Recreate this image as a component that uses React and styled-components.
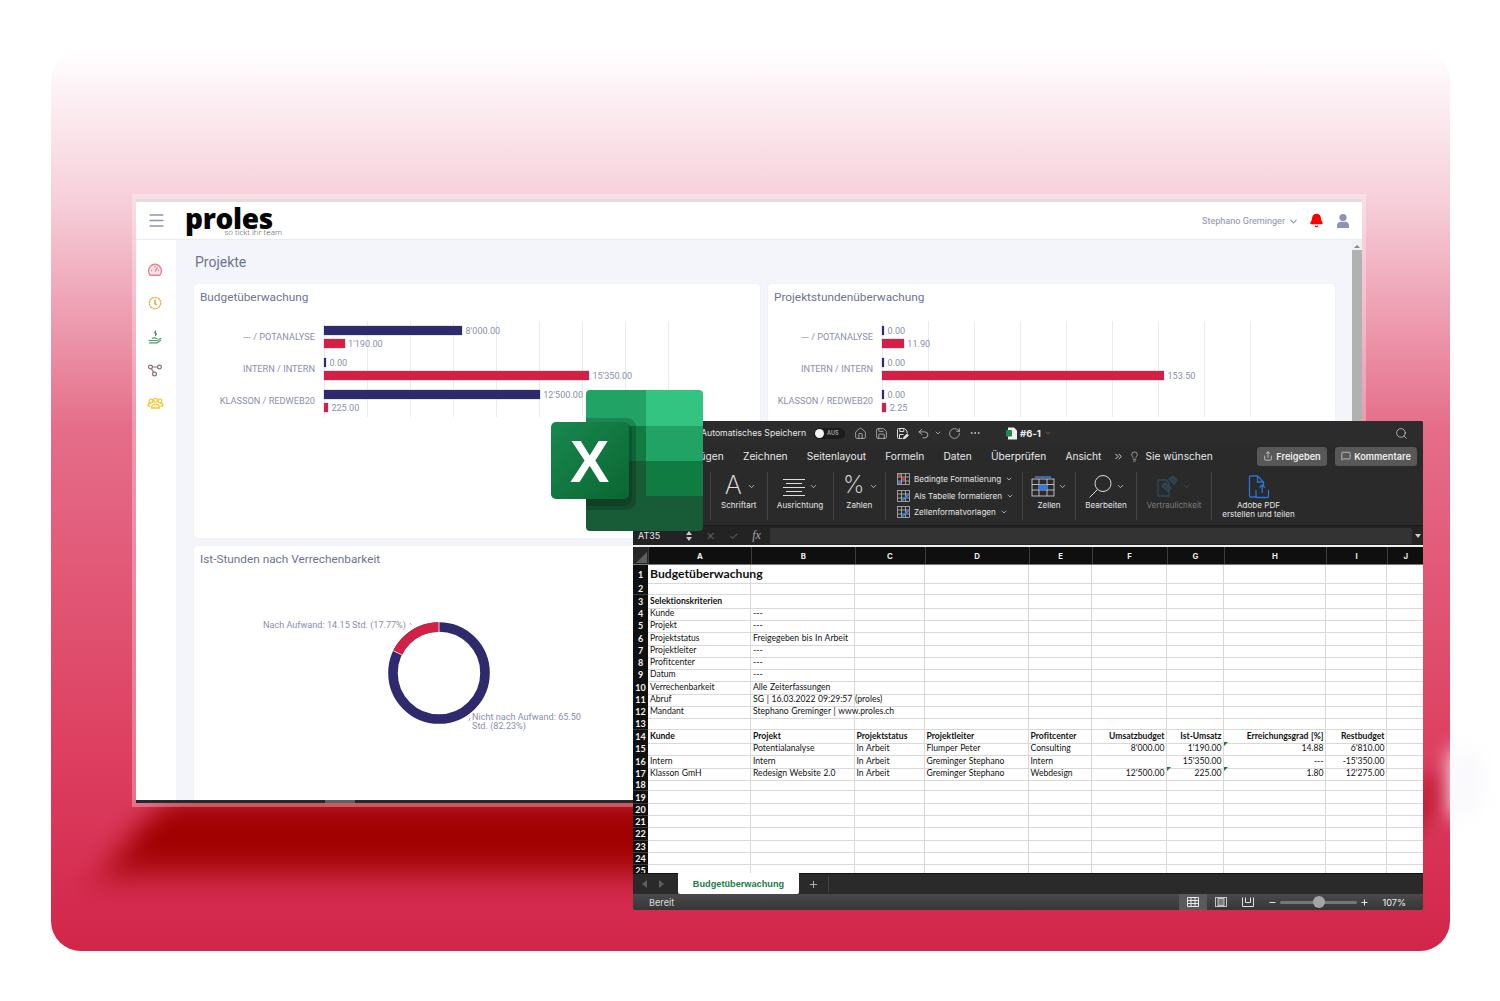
import React from 'react';
import styled, { createGlobalStyle } from 'styled-components';
import {
  Menu, ChevronDown, Bell, House, Save, Undo2, RotateCw, Ellipsis, Search, Lightbulb,
  Share, MessageSquare, ChevronsRight, Plus, Minus,
} from 'lucide-react';

const GlobalStyle = createGlobalStyle`
  html, body { margin: 0; padding: 0; background: #fff; }
  * { box-sizing: border-box; }
  body { font-family: "Roboto", "Liberation Sans", sans-serif; font-variant-ligatures: none; }
`;

const Stage = styled.div`
  position: relative;
  width: 1500px;
  height: 1001px;
  padding: 50px 50px 50px 51px;
  overflow: hidden;
`;

const Hero = styled.div`
  position: relative;
  height: 901px;
  border-radius: 30px;
  overflow: hidden;
  background: linear-gradient(180deg, #ffffff 0%, #f6ced9 17%, #e56d89 42%, #dd3f60 78%, #d2254a 100%);
`;

const FloorShadow = styled.div`
  position: absolute;
  left: 82px;
  top: 748px;
  width: 1270px;
  height: 76px;
  background: #a00000;
  filter: blur(17px);
  transform: skewX(-38deg);
`;

const SideGlow = styled.div`
  position: absolute;
  left: 1370px;
  top: 725px;
  width: 24px;
  height: 36px;
  border-radius: 50%;
  background: #c9203f;
  filter: blur(9px);
`;

const OuterGlow = styled.div`
  position: absolute;
  left: 1450px;
  top: 750px;
  width: 34px;
  height: 66px;
  border-radius: 0 50% 50% 0;
  background: #f9f9fc;
  filter: blur(10px);
`;

/* proles app window */
const Frame = styled.div`
  position: absolute;
  left: 132px;
  top: 194px;
  width: 1234px;
  height: 613px;
  padding: 5px 4px 4px;
  background: rgba(255, 255, 255, 0.3);
`;

const AppWindow = styled.div`
  display: flex;
  flex-direction: column;
  width: 1226px;
  height: 604px;
  border-top: 3px solid #dedede;
  background: #fff;
`;

const TopBar = styled.header`
  display: flex;
  align-items: center;
  flex: 0 0 38px;
  padding: 0 11px 0 11px;
  border-bottom: 1px solid #e8ebf3;
  background: #fff;
  color: #8d93b4;
`;

const Logo = styled.div`
  display: flex;
  flex-direction: column;
  margin-left: 19px;
  width: 97px;
`;

const LogoWord = styled.span`
  font: 800 28px/24px "Open Sans", sans-serif;
  color: #050505;
  letter-spacing: -0.3px;
`;

const LogoTag = styled.span`
  align-self: flex-end;
  margin-top: -2px;
  font: 300 8px/8px "Open Sans", sans-serif;
  color: #444;
  white-space: nowrap;
`;

const UserBox = styled.div`
  display: flex;
  align-items: center;
  margin-left: auto;
`;

const UserName = styled.span`
  font-size: 9.1px;
  color: #8a90ab;
`;

const Main = styled.div`
  display: flex;
  flex: 1;
  min-height: 0;
`;

const SideNav = styled.nav`
  display: flex;
  flex-direction: column;
  align-items: center;
  gap: 17.4px;
  flex: 0 0 40px;
  padding: 22px 2px 0 0;
  background: #fff;
`;

const Content = styled.main`
  flex: 1;
  padding: 14px 17px 0 18px;
  background: #f3f5fa;
  overflow: hidden;
`;

const PageTitle = styled.h1`
  margin: 0 0 14px 1px;
  font-size: 14px;
  line-height: 16px;
  font-weight: 400;
  color: #6d7393;
`;

const CardGrid = styled.div`
  display: grid;
  grid-template-columns: 566px 567px;
  grid-template-rows: 254px 260px;
  gap: 8px;
`;

const Card = styled.section`
  padding: 6px 6px 0;
  border-radius: 3px;
  background: #fff;
  box-shadow: 0 0 1px rgba(120, 130, 170, 0.25);
`;

const CardTitle = styled.h2`
  margin: 0 0 17px;
  font-size: 11.8px;
  line-height: 14px;
  font-weight: 400;
  color: #6d7393;
`;

const Chart = styled.div`
  display: grid;
  grid-template-columns: ${(p) => p.$labelWidth}px ${(p) => p.$plotWidth}px;
  column-gap: 9px;
`;

const Labels = styled.div`
  display: flex;
  flex-direction: column;
`;

const AxisLabel = styled.div`
  height: 32px;
  line-height: 31px;
  text-align: right;
  font-size: 9.2px;
  color: #8a90ab;
  white-space: nowrap;
`;

const Plot = styled.div`
  height: 96px;
  background-image: repeating-linear-gradient(90deg, #e9ebf1 0 1px, transparent 1px ${(p) => p.$step}px);
`;

const BarGroup = styled.div`
  display: flex;
  flex-direction: column;
  gap: 4px;
  height: 32px;
  padding-top: 5px;
`;

const BarLine = styled.div`
  display: flex;
  align-items: center;
  gap: 3.5px;
  height: 9px;
`;

const Bar = styled.div`
  height: 9px;
  background: ${(p) => p.$color};
  box-shadow: 0 0 0 0.5px rgba(150, 160, 200, 0.5);
`;

const BarValue = styled.span`
  font-size: 9.1px;
  color: #8a90ab;
  white-space: nowrap;
`;

const DonutSvg = styled.svg`
  display: block;
  width: 560px;
  height: 200px;
  margin-top: -7px;
  overflow: visible;
`;

const DonutText = styled.text`
  font: 9.1px "Roboto", sans-serif;
  fill: #8a90ab;
`;

const ScrollTrack = styled.div`
  display: flex;
  flex-direction: column;
  align-items: center;
  flex: 0 0 10px;
  background: #f1f1f1;
`;

const ScrollArrow = styled.div`
  margin-top: 5px;
  border: 3px solid transparent;
  border-top: 0;
  border-bottom: 3px solid #888;
`;

const ScrollThumb = styled.div`
  width: 100%;
  flex: 1;
  margin-top: 2px;
  background: #b1b1b1;
`;

const HScroll = styled.div`
  display: flex;
  justify-content: flex-start;
  flex: 0 0 3px;
  padding-left: 189px;
  background: #23292c;
`;

const HThumb = styled.div`
  width: 30px;
  background: #5b6266;
`;

/* excel window */
const ExcelWindow = styled.div`
  position: absolute;
  left: 633px;
  top: 421px;
  width: 790px;
  height: 489px;
  display: flex;
  flex-direction: column;
  overflow: hidden;
  border-radius: 2px 2px 3px 3px;
  background: #2a2a2b;
  color: #e8e8e8;
  font-family: "Inter", "Liberation Sans", sans-serif;
`;

const TitleBar = styled.div`
  display: flex;
  align-items: center;
  flex: 0 0 24px;
  padding-left: 68px;
  padding-right: 15px;
  background: #2c2c2d;
  font-size: 9px;
`;

const AutoSave = styled.span`
  margin-right: 8px;
  font-size: 8.7px;
  color: #e6e6e6;
`;

const Toggle = styled.div`
  display: flex;
  align-items: center;
  gap: 3px;
  width: 31px;
  height: 11px;
  margin-right: 9px;
  border-radius: 6px;
  background: #1c1c1c;
  font-size: 5.5px;
  font-weight: 600;
  color: #aaa;
`;

const Knob = styled.i`
  width: 9px;
  height: 9px;
  margin-left: 1px;
  border-radius: 50%;
  background: #f2f2f2;
`;

const QuickIcons = styled.div`
  display: flex;
  align-items: center;
  gap: 8px;
  color: #dcdcdc;
`;

const QuickChevron = styled(ChevronDown)`
  margin: 0 -1.5px 0 -4.5px;
`;

const DocName = styled.div`
  display: flex;
  align-items: center;
  gap: 3px;
  margin-left: 25px;
  font-size: 9.5px;
  font-weight: 700;
  color: #eee;
`;

const TitleRight = styled.div`
  margin-left: auto;
  display: flex;
  color: #ddd;
`;

const TabRow = styled.div`
  display: flex;
  align-items: center;
  flex: 0 0 22px;
  padding: 0 6px 0 0;
  background: #2a2a2b;
  font-size: 10.2px;
  color: #e8e8e8;
`;

const Tab = styled.span`
  margin-left: 19.2px;
  white-space: nowrap;
`;

const TabSpacer = styled.div`
  flex: 0 0 29px;
`;

const TabHint = styled.span`
  display: flex;
  align-items: center;
  gap: 5px;
  margin-left: 12px;
  white-space: nowrap;
`;

const ActionButton = styled.button`
  display: flex;
  align-items: center;
  justify-content: center;
  gap: 3px;
  width: ${(p) => p.$width}px;
  height: 19px;
  margin-left: ${(p) => (p.$gap ? `${p.$gap}px` : 'auto')};
  padding: 0;
  border: 0;
  border-radius: 3px;
  background: #585858;
  color: #eee;
  font: 600 9.2px "Inter", sans-serif;
`;

const Ribbon = styled.div`
  display: flex;
  flex: 0 0 58px;
  padding: 5px 0 5px;
  background: #2a2a2b;
`;

const RibbonGroup = styled.div`
  display: flex;
  flex-direction: column;
  align-items: center;
  flex: 0 0 ${(p) => p.$width}px;
  border-right: ${(p) => (p.$plain ? 0 : '1px solid #454545')};
`;

const RibbonIcon = styled.div`
  display: flex;
  align-items: center;
  justify-content: center;
  gap: 3px;
  height: 29px;
  color: #dcdcdc;
`;

const GlyphBig = styled.span`
  margin: -3px 2px 0 3px;
  font: 200 ${(p) => p.$size}px/26px "Inter", sans-serif;
  color: #e4e4e4;
`;

const RibbonLabel = styled.span`
  text-align: center;
  font-size: 8.1px;
  line-height: 9px;
  color: ${(p) => (p.$dim ? '#7c7c7c' : '#e4e4e4')};
  white-space: nowrap;
`;

const StyleList = styled.div`
  display: flex;
  flex-direction: column;
  align-self: flex-start;
  gap: 3.3px;
  padding: 0 0 0 11px;
`;

const StyleItem = styled.div`
  display: flex;
  align-items: center;
  gap: 4px;
  height: 13.5px;
  font-size: 8.1px;
  color: #e4e4e4;
  white-space: nowrap;
`;

const FormulaBar = styled.div`
  display: flex;
  align-items: center;
  flex: 0 0 20px;
  background: #232324;
  border-top: 1px solid #1a1a1a;
  color: #e8e8e8;
`;

const NameBox = styled.div`
  flex: 0 0 52px;
  padding-left: 5px;
  font-size: 9px;
`;

const Stepper = styled.div`
  display: flex;
  flex-direction: column;
  align-items: center;
  gap: 2px;
  flex: 0 0 8px;
  margin-right: 6px;
`;

const Tri = styled.i`
  border: 3px solid transparent;
  border-top: ${(p) => (p.$up ? 0 : '4px solid #ccc')};
  border-bottom: ${(p) => (p.$up ? '4px solid #ccc' : 0)};
  color: transparent;
`;

const FormulaIcons = styled.div`
  display: grid;
  grid-template-columns: repeat(3, 23px);
  justify-items: center;
  align-items: center;
  flex: 0 0 71px;
  font-size: 11px;
  color: #5c5c5c;
`;

const Fx = styled.span`
  font: italic 12px "Liberation Serif", serif;
  color: #a9a9a9;
`;

const FormulaInput = styled.div`
  flex: 1;
  height: 16px;
  border-radius: 2px;
  background: #333334;
`;

const FormulaEnd = styled.div`
  flex: 0 0 11px;
  display: flex;
  justify-content: center;
`;

const Sheet = styled.div`
  flex: 0 0 328px;
  border-top: 2px solid #f0f0f0;
  overflow: hidden;
  background: #fff;
  font-family: "Lato", "Liberation Sans", sans-serif;
`;

const COLUMNS = '15px 103px 103.5px 70px 104px 63px 75px 57px 102px 61px 37.5px';

const HeaderRow = styled.div`
  display: grid;
  grid-template-columns: ${COLUMNS};
  height: 18px;
  background: #0f0f0f;
  border-bottom: 1px solid #777;
`;

const ColHead = styled.div`
  display: flex;
  align-items: center;
  justify-content: center;
  border-left: 1px solid #3c3c3c;
  font: 700 7.8px "Inter", sans-serif;
  color: #eee;
`;

const Corner = styled.div`
  position: relative;
  background: #262626;
  &::after {
    content: '';
    position: absolute;
    right: 1px;
    bottom: 1px;
    border-style: solid;
    border-width: 0 0 11px 11px;
    border-color: transparent transparent #5e5e5e transparent;
  }
`;

const Row = styled.div`
  display: grid;
  grid-template-columns: ${COLUMNS};
  height: ${(p) => (p.$tall ? 17.4 : 12.3)}px;
`;

const RowHead = styled.div`
  display: flex;
  align-items: center;
  justify-content: center;
  background: #101010;
  border-bottom: 1px solid #3a3a3a;
  font-size: 9px;
  font-weight: 700;
  color: #f2f2f2;
  overflow: hidden;
`;

const Cell = styled.div`
  position: relative;
  padding: ${(p) => (p.$right ? '0 1px 0 0' : '0 2px')};
  border-right: 1px solid #d9d9d9;
  border-bottom: 1px solid #d9d9d9;
  font-size: ${(p) => (p.$title ? '12.2px' : '8.6px')};
  font-weight: ${(p) => (p.$bold ? 700 : 400)};
  line-height: ${(p) => (p.$title ? '18px' : '13px')};
  word-spacing: 0.5px;
  text-align: ${(p) => (p.$right ? 'right' : 'left')};
  color: #111;
  white-space: nowrap;
  &::before {
    content: '';
    display: ${(p) => (p.$mark ? 'block' : 'none')};
    position: absolute;
    left: 0;
    top: 0;
    border-style: solid;
    border-width: 4px 4px 0 0;
    border-color: #107c41 transparent transparent transparent;
  }
`;

const SheetTabs = styled.div`
  display: flex;
  align-items: stretch;
  flex: 0 0 21px;
  border-top: 1px solid #111;
  background: #2a2a2b;
  color: #6a6a6a;
`;

const TabArrows = styled.div`
  display: flex;
  align-items: center;
  gap: 12px;
  flex: 0 0 45px;
  padding-left: 9px;
`;

const ArrowLeft = styled.i`
  border: 4px solid transparent;
  border-left: 0;
  border-right: 5px solid #5e5e5e;
`;

const ArrowRight = styled.i`
  border: 4px solid transparent;
  border-right: 0;
  border-left: 5px solid #5e5e5e;
`;

const SheetTab = styled.div`
  display: flex;
  align-items: center;
  justify-content: center;
  flex: 0 0 121px;
  margin-top: -1px;
  border-radius: 0 0 2px 2px;
  background: #fff;
  font: 700 9.2px "Liberation Sans", sans-serif;
  color: #1c7c45;
`;

const AddSheet = styled.div`
  display: flex;
  align-items: center;
  justify-content: center;
  flex: 0 0 30px;
  margin: 2px 0;
  border-right: 1px solid #444;
  color: #bdbdbd;
`;

const StatusBar = styled.div`
  display: flex;
  align-items: center;
  flex: 1;
  padding: 0 17px 0 16px;
  background: linear-gradient(180deg, #4a4a4a, #363636);
  font-size: 9.2px;
  color: #dcdcdc;
`;

const ViewButtons = styled.div`
  display: flex;
  align-self: stretch;
  margin-left: auto;
`;

const ViewButton = styled.div`
  display: flex;
  align-items: center;
  justify-content: center;
  width: 27.5px;
  background: ${(p) => (p.$active ? '#5a5a5a' : 'transparent')};
`;

const Zoomer = styled.div`
  display: flex;
  align-items: center;
  gap: 3px;
  margin-left: 6.5px;
  color: #eee;
`;

const SliderTrack = styled.div`
  position: relative;
  width: 77px;
  height: 3px;
  border-radius: 2px;
  background: #777;
`;

const SliderKnob = styled.i`
  position: absolute;
  left: 33px;
  top: -5px;
  width: 12px;
  height: 12px;
  border-radius: 50%;
  background: #a4a4a4;
`;

const ZoomValue = styled.span`
  margin-left: 10px;
`;

const ExcelLogo = styled.svg`
  position: absolute;
  left: 550px;
  top: 389px;
  width: 153px;
  height: 143px;
`;

const LogoX = styled.text`
  font: 700 59px "Liberation Sans", sans-serif;
  fill: #fff;
`;

const budgetRows = [
  { label: '--- / POTANALYSE', a: 8000, b: 1190, aText: "8'000.00", bText: "1'190.00" },
  { label: 'INTERN / INTERN', a: 0, b: 15350, aText: '0.00', bText: "15'350.00" },
  { label: 'KLASSON / REDWEB20', a: 12500, b: 225, aText: "12'500.00", bText: '225.00' },
];

const hourRows = [
  { label: '--- / POTANALYSE', a: 0, b: 11.9, aText: '0.00', bText: '11.90' },
  { label: 'INTERN / INTERN', a: 0, b: 153.5, aText: '0.00', bText: '153.50' },
  { label: 'KLASSON / REDWEB20', a: 0, b: 2.25, aText: '0.00', bText: '2.25' },
];

const columnHeads = ['A', 'B', 'C', 'D', 'E', 'F', 'G', 'H', 'I', 'J'];

const sheetRows = [
  [{ t: 'Budgetüberwachung', title: true, bold: true }],
  [],
  [{ t: 'Selektionskriterien', bold: true }],
  ['Kunde', '---'],
  ['Projekt', '---'],
  ['Projektstatus', 'Freigegeben bis In Arbeit'],
  ['Projektleiter', '---'],
  ['Profitcenter', '---'],
  ['Datum', '---'],
  ['Verrechenbarkeit', 'Alle Zeiterfassungen'],
  ['Abruf', 'SG | 16.03.2022 09:29:57 (proles)'],
  ['Mandant', 'Stephano Greminger | www.proles.ch'],
  [],
  [
    { t: 'Kunde', bold: true }, { t: 'Projekt', bold: true }, { t: 'Projektstatus', bold: true },
    { t: 'Projektleiter', bold: true }, { t: 'Profitcenter', bold: true },
    { t: 'Umsatzbudget', bold: true, right: true }, { t: 'Ist-Umsatz', bold: true, right: true },
    { t: 'Erreichungsgrad [%]', bold: true, right: true }, { t: 'Restbudget', bold: true, right: true },
  ],
  [
    '', 'Potentialanalyse', 'In Arbeit', 'Flumper Peter', 'Consulting',
    { t: "8'000.00", right: true }, { t: "1'190.00", right: true },
    { t: '14.88', right: true, mark: true }, { t: "6'810.00", right: true },
  ],
  [
    'Intern', 'Intern', 'In Arbeit', 'Greminger Stephano', 'Intern',
    '', { t: "15'350.00", right: true },
    { t: '---', right: true }, { t: "-15'350.00", right: true },
  ],
  [
    'Klasson GmH', 'Redesign Website 2.0', 'In Arbeit', 'Greminger Stephano', 'Webdesign',
    { t: "12'500.00", right: true }, { t: '225.00', right: true, mark: true },
    { t: '1.80', right: true, mark: true }, { t: "12'275.00", right: true },
  ],
  [], [], [], [], [], [], [], [],
];

function BudgetChart({ rows, scale, labelWidth, plotWidth, step }) {
  return (
    <Chart $labelWidth={labelWidth} $plotWidth={plotWidth}>
      <Labels>
        {rows.map((row) => <AxisLabel key={row.label}>{row.label}</AxisLabel>)}
      </Labels>
      <Plot $step={step}>
        {rows.map((row) => (
          <BarGroup key={row.label}>
            <BarLine>
              <Bar $color="#2f2a6b" style={{ width: Math.max(row.a * scale, 2) }} />
              <BarValue>{row.aText}</BarValue>
            </BarLine>
            <BarLine>
              <Bar $color="#d32045" style={{ width: Math.max(row.b * scale, 2) }} />
              <BarValue>{row.bText}</BarValue>
            </BarLine>
          </BarGroup>
        ))}
      </Plot>
    </Chart>
  );
}

function Donut() {
  const cx = 239;
  const cy = 97;
  const r = 46;
  const angle = (64 * Math.PI) / 180;
  const sx = cx - r * Math.sin(angle);
  const sy = cy - r * Math.cos(angle);
  return (
    <DonutSvg viewBox="0 0 560 200">
      <circle cx={cx} cy={cy} r={r} fill="none" stroke="#2f2a6b" strokeWidth="9.6" />
      <path d={`M${sx} ${sy}A${r} ${r} 0 0 1 ${cx} ${cy - r}`} fill="none" stroke="#d32045" strokeWidth="9.6" />
      <path d={`M${cx} ${cy - r - 5}V${cy - r + 5}M${sx - 4.3} ${sy - 2.1}L${sx + 4.3} ${sy + 2.1}`} stroke="#fff" strokeWidth="0.8" />
      <path d="M210 47l1.5 2M270 142l-1 3" stroke="#8a90ab" strokeWidth="0.8" fill="none" />
      <DonutText x="63" y="52">Nach Aufwand: 14.15 Std. (17.77%)</DonutText>
      <DonutText x="272" y="144">Nicht nach Aufwand: 65.50</DonutText>
      <DonutText x="272" y="153">Std. (82.23%)</DonutText>
    </DonutSvg>
  );
}

const GaugeIcon = () => (
  <svg width="16" height="16" viewBox="0 0 16 16" fill="none" stroke="#e97f93" strokeWidth="1.4">
    <path d="M3.2 13.2A6.5 6.5 0 1 1 12.8 13.2Z" fill="#fbe3e7" />
    <path d="M8 9.5L10.5 5.5M4 8.5h1.2M8 4.2v1.2M12 8.5h-1" />
  </svg>
);

const ClockIcon = () => (
  <svg width="16" height="16" viewBox="0 0 16 16" fill="none" stroke="#f6a73c" strokeWidth="1.3">
    <circle cx="8" cy="8" r="5.7" strokeDasharray="2.4 0.5" />
    <path d="M8 4.6V8.4L9.6 10" stroke="#e2913a" />
  </svg>
);

const HandIcon = () => (
  <svg width="16" height="16" viewBox="0 0 16 16" fill="none" stroke="#4f9d6b" strokeWidth="1.2">
    <path d="M1.5 11.5h8.5l4.5-2.2M2 13.8h8l4-2.6M5 9.5c1.5-.8 3.5-.8 5 .4" />
    <path d="M8.5 2.5c-1.6 0-1.6 1.7 0 1.7s1.6 1.8 0 1.8M8.5 1.6v5.6" stroke="#3e8a5b" strokeWidth="0.9" />
  </svg>
);

const NodesIcon = () => (
  <svg width="16" height="16" viewBox="0 0 16 16" fill="none" stroke="#8f6a70" strokeWidth="1.2">
    <circle cx="3.5" cy="5" r="1.9" />
    <circle cx="12.5" cy="5" r="1.9" />
    <circle cx="7.5" cy="12" r="1.9" />
    <path d="M5.4 5h5.2M4.5 6.7L6.5 10.3" />
  </svg>
);

const TeamIcon = () => (
  <svg width="17" height="16" viewBox="0 0 17 16" fill="none" stroke="#fbc62f" strokeWidth="1.3">
    <circle cx="4" cy="5" r="1.8" />
    <circle cx="8.5" cy="4.2" r="1.9" />
    <circle cx="13" cy="5" r="1.8" />
    <path d="M1 10c0-2 1.5-2.8 3-2.8M16 10c0-2-1.5-2.8-3-2.8M4.5 12c0-2.5 2-3.800 4-3.800s4 1.300 4 3.800zM1 10h2.500M13.500 10H16" />
  </svg>
);

const UserIcon = () => (
  <svg width="16" height="16" viewBox="0 0 16 16" fill="#8d93b4">
    <circle cx="8" cy="4.5" r="3.6" />
    <path d="M2 15v-2.500C2 10 4 8.800 5.500 8.800h5c1.500 0 3.500 1.200 3.500 3.700V15z" />
  </svg>
);

const SaveEditIcon = () => (
  <svg width="13" height="13" viewBox="0 0 13 13" fill="none" stroke="#dcdcdc" strokeWidth="1">
    <path d="M6.500 11.500H2.500a1 1 0 0 1-1-1v-8a1 1 0 0 1 1-1h6l2.500 2.500v2" />
    <path d="M3.800 1.500v3h4v-3M3.500 11v-3.500h4" />
    <path d="M7.500 11.800l.4-1.800 3.200-3.200 1.400 1.400-3.200 3.200z" fill="#dcdcdc" />
  </svg>
);

const FileIcon = () => (
  <svg width="11" height="13" viewBox="0 0 11 13">
    <path d="M2 0.500h6l3 3v9H2z" fill="#f0f0f0" />
    <rect x="0" y="3" width="6" height="6.500" rx="0.800" fill="#1d8a52" />
  </svg>
);

const AlignIcon = () => (
  <svg width="24" height="20" viewBox="0 0 24 20" stroke="#dcdcdc" strokeWidth="1">
    <path d="M1 2.500h22M4 6.500h16M1 10.500h22M4 14.500h16M1 18.500h22" />
  </svg>
);

const StyleCondIcon = () => (
  <svg width="13" height="12" viewBox="0 0 13 12" fill="none" stroke="#b7b7b7" strokeWidth="0.800">
    <rect x="0.500" y="0.500" width="12" height="11" />
    <path d="M0.500 4h12M0.500 8h12M4.500 0.500v11M8.500 0.500v11" />
    <rect x="1" y="1" width="3" height="2.500" fill="#d33a3a" stroke="none" />
    <rect x="5" y="4.500" width="3" height="3" fill="#d33a3a" stroke="none" />
    <rect x="1" y="8.500" width="3" height="2.500" fill="#3a6fd3" stroke="none" />
  </svg>
);

const StyleTableIcon = () => (
  <svg width="13" height="12" viewBox="0 0 13 12" fill="none" stroke="#b7b7b7" strokeWidth="0.800">
    <rect x="0.500" y="0.500" width="12" height="11" />
    <path d="M0.500 4h12M0.500 8h12M4.500 0.500v11M8.500 0.500v11" />
    <path d="M4 10.500L10.500 4l1.500 1.500L5.500 11.500z" fill="#3a7fd8" stroke="none" />
  </svg>
);

const CellsIcon = () => (
  <svg width="24" height="22" viewBox="0 0 24 22" fill="none" stroke="#c9c9c9" strokeWidth="0.900">
    <path d="M4 1h16" stroke="#3a7fd8" strokeWidth="1.600" />
    <rect x="1" y="3" width="22" height="17" />
    <path d="M1 8.500h22M1 14h22M8 3v17M16 3v17" />
    <rect x="8" y="8.500" width="8" height="5.500" fill="#2f7be0" stroke="none" />
  </svg>
);

const LensIcon = () => (
  <svg width="25" height="25" viewBox="0 0 25 25" fill="none" stroke="#dcdcdc" strokeWidth="1">
    <circle cx="15" cy="9.500" r="8" />
    <path d="M9.500 15.500L1.500 23.500" />
  </svg>
);

const PrivacyIcon = () => (
  <svg width="22" height="24" viewBox="0 0 22 24" fill="none" stroke="#2f4a5c" strokeWidth="1.300">
    <path d="M1 5h8l3 3v13H1z" />
    <path d="M5 11l6 5 3-3-6-5zM12 4l4-3 4 4-3 4z" fill="#2b3f4d" />
  </svg>
);

const PdfIcon = () => (
  <svg width="22" height="24" viewBox="0 0 22 24" fill="none" stroke="#2a72d4" strokeWidth="1.300">
    <path d="M9 22H2.500a1 1 0 0 1-1-1V2a1 1 0 0 1 1-1h7l6 6v4" />
    <path d="M9.500 1v6h6" />
    <path d="M8 15v6.500a1 1 0 0 0 1 1h10.500a1 1 0 0 0 1-1V15M14.200 18V10M11.500 12.500l2.700-2.700 2.700 2.700" />
  </svg>
);

const GridViewIcon = () => (
  <svg width="12" height="10" viewBox="0 0 12 10" fill="none" stroke="#e8e8e8" strokeWidth="1">
    <path d="M0.500 0.500h11v9h-11zM0.500 3.500h11M0.500 6.500h11M4 0.500v9M8 0.500v9" />
  </svg>
);

const PageViewIcon = () => (
  <svg width="12" height="10" viewBox="0 0 12 10" fill="none" stroke="#c4c4c4" strokeWidth="1">
    <rect x="0.500" y="0.500" width="11" height="9" />
    <rect x="3" y="1.500" width="6" height="7" fill="#7b7b7b" />
  </svg>
);

const BreakViewIcon = () => (
  <svg width="12" height="10" viewBox="0 0 12 10" fill="none" stroke="#e0e0e0" strokeWidth="1">
    <path d="M0.500 0.500v9h11v-9M3.500 0.500v5h5v-5" />
  </svg>
);

const Chevron = ({ size = 9, color }) => <ChevronDown size={size} strokeWidth={2} color={color} />;

function ProlesWindow() {
  return (
    <Frame>
      <AppWindow>
        <TopBar>
          <Menu size={19} strokeWidth={2} />
          <Logo>
            <LogoWord>proles</LogoWord>
            <LogoTag>so tickt ihr team</LogoTag>
          </Logo>
          <UserBox>
            <UserName>Stephano Greminger</UserName>
            <ChevronDown size={11} strokeWidth={2.4} style={{ margin: '1px 10px 0 3px' }} />
            <Bell size={15} color="#f00" fill="#f00" style={{ marginRight: 11 }} />
            <UserIcon />
          </UserBox>
        </TopBar>
        <Main>
          <SideNav>
            <GaugeIcon />
            <ClockIcon />
            <HandIcon />
            <NodesIcon />
            <TeamIcon />
          </SideNav>
          <Content>
            <PageTitle>Projekte</PageTitle>
            <CardGrid>
              <Card>
                <CardTitle>Budgetüberwachung</CardTitle>
                <BudgetChart rows={budgetRows} scale={0.01726} labelWidth={115} plotWidth={346} step={43} />
              </Card>
              <Card>
                <CardTitle>Projektstundenüberwachung</CardTitle>
                <BudgetChart rows={hourRows} scale={1.837} labelWidth={99} plotWidth={369} step={46} />
              </Card>
              <Card>
                <CardTitle>Ist-Stunden nach Verrechenbarkeit</CardTitle>
                <Donut />
              </Card>
              <Card />
            </CardGrid>
          </Content>
          <ScrollTrack>
            <ScrollArrow />
            <ScrollThumb />
          </ScrollTrack>
        </Main>
        <HScroll><HThumb /></HScroll>
      </AppWindow>
    </Frame>
  );
}

function SheetCell({ cell }) {
  if (typeof cell === 'string') return <Cell>{cell}</Cell>;
  return (
    <Cell $bold={cell.bold} $right={cell.right} $mark={cell.mark} $title={cell.title}>
      {cell.t}
    </Cell>
  );
}

function SheetGrid() {
  return (
    <Sheet>
      <HeaderRow>
        <Corner />
        {columnHeads.map((name) => <ColHead key={name}>{name}</ColHead>)}
      </HeaderRow>
      {sheetRows.map((cells, i) => (
        <Row key={i} $tall={i === 0}>
          <RowHead>{i + 1}</RowHead>
          {Array.from({ length: 10 }, (_, c) => <SheetCell key={c} cell={cells[c] ?? ''} />)}
        </Row>
      ))}
    </Sheet>
  );
}

function ExcelApp() {
  return (
    <ExcelWindow>
      <TitleBar>
        <AutoSave>Automatisches Speichern</AutoSave>
        <Toggle><Knob />AUS</Toggle>
        <QuickIcons>
          <House size={13} strokeWidth={1.2} />
          <Save size={13} strokeWidth={1.2} />
          <SaveEditIcon />
          <Undo2 size={13} strokeWidth={1.3} />
          <QuickChevron size={8} strokeWidth={2} />
          <RotateCw size={13} strokeWidth={1.2} />
          <Ellipsis size={12} strokeWidth={1.5} />
        </QuickIcons>
        <DocName><FileIcon />#6-1<Chevron size={8} color="#777" /></DocName>
        <TitleRight><Search size={13} strokeWidth={1.3} /></TitleRight>
      </TitleBar>
      <TabRow>
        <TabSpacer />
        <Tab>Einfügen</Tab>
        <Tab>Zeichnen</Tab>
        <Tab>Seitenlayout</Tab>
        <Tab>Formeln</Tab>
        <Tab>Daten</Tab>
        <Tab>Überprüfen</Tab>
        <Tab>Ansicht</Tab>
        <TabHint>
          <ChevronsRight size={11} strokeWidth={2} />
          <Lightbulb size={11} strokeWidth={1.3} />
          <span>Sie wünschen</span>
        </TabHint>
        <ActionButton $width={70}><Share size={10} strokeWidth={1.5} />Freigeben</ActionButton>
        <ActionButton $width={82} $gap={8}><MessageSquare size={10} strokeWidth={1.5} />Kommentare</ActionButton>
      </TabRow>
      <Ribbon>
        <RibbonGroup $width={78} />
        <RibbonGroup $width={56.5}>
          <RibbonIcon><GlyphBig $size={26}>A</GlyphBig><Chevron /></RibbonIcon>
          <RibbonLabel>Schriftart</RibbonLabel>
        </RibbonGroup>
        <RibbonGroup $width={66}>
          <RibbonIcon><AlignIcon /><Chevron /></RibbonIcon>
          <RibbonLabel>Ausrichtung</RibbonLabel>
        </RibbonGroup>
        <RibbonGroup $width={52.5}>
          <RibbonIcon><GlyphBig $size={24}>%</GlyphBig><Chevron /></RibbonIcon>
          <RibbonLabel>Zahlen</RibbonLabel>
        </RibbonGroup>
        <RibbonGroup $width={137}>
          <StyleList>
            <StyleItem><StyleCondIcon />Bedingte Formatierung <Chevron size={8} /></StyleItem>
            <StyleItem><StyleTableIcon />Als Tabelle formatieren <Chevron size={8} /></StyleItem>
            <StyleItem><StyleTableIcon />Zellenformatvorlagen <Chevron size={8} /></StyleItem>
          </StyleList>
        </RibbonGroup>
        <RibbonGroup $width={53}>
          <RibbonIcon><CellsIcon /><Chevron /></RibbonIcon>
          <RibbonLabel>Zellen</RibbonLabel>
        </RibbonGroup>
        <RibbonGroup $width={61}>
          <RibbonIcon><LensIcon /><Chevron /></RibbonIcon>
          <RibbonLabel>Bearbeiten</RibbonLabel>
        </RibbonGroup>
        <RibbonGroup $width={75}>
          <RibbonIcon><PrivacyIcon /><Chevron color="#555" /></RibbonIcon>
          <RibbonLabel $dim>Vertraulichkeit</RibbonLabel>
        </RibbonGroup>
        <RibbonGroup $width={93} $plain>
          <RibbonIcon><PdfIcon /></RibbonIcon>
          <RibbonLabel>Adobe PDF<br />erstellen und teilen</RibbonLabel>
        </RibbonGroup>
      </Ribbon>
      <FormulaBar>
        <NameBox>AT35</NameBox>
        <Stepper><Tri $up /><Tri /></Stepper>
        <FormulaIcons>
          <span>✕</span>
          <span>✓</span>
          <Fx>fx</Fx>
        </FormulaIcons>
        <FormulaInput />
        <FormulaEnd><Tri /></FormulaEnd>
      </FormulaBar>
      <SheetGrid />
      <SheetTabs>
        <TabArrows><ArrowLeft /><ArrowRight /></TabArrows>
        <SheetTab>Budgetüberwachung</SheetTab>
        <AddSheet><Plus size={11} strokeWidth={2} /></AddSheet>
      </SheetTabs>
      <StatusBar>
        Bereit
        <ViewButtons>
          <ViewButton $active><GridViewIcon /></ViewButton>
          <ViewButton><PageViewIcon /></ViewButton>
          <ViewButton><BreakViewIcon /></ViewButton>
        </ViewButtons>
        <Zoomer>
          <Minus size={9} strokeWidth={2.5} />
          <SliderTrack><SliderKnob /></SliderTrack>
          <Plus size={9} strokeWidth={2.5} />
          <ZoomValue>107%</ZoomValue>
        </Zoomer>
      </StatusBar>
    </ExcelWindow>
  );
}

function ExcelMark() {
  return (
    <ExcelLogo viewBox="0 0 153 143">
      <defs>
        <linearGradient id="xlFront" x1="0" y1="0" x2="1" y2="1">
          <stop offset="0" stopColor="#18884f" />
          <stop offset="1" stopColor="#0b6631" />
        </linearGradient>
      </defs>
      <path d="M40 1h57v36H36V5a4 4 0 0 1 4-4z" fill="#21a366" />
      <path d="M96 1h53a4 4 0 0 1 4 4v32H96z" fill="#33c481" />
      <rect x="36" y="37" width="60" height="35" fill="#107c41" />
      <rect x="96" y="37" width="57" height="35" fill="#21a366" />
      <rect x="36" y="72" width="60" height="35" fill="#185c37" />
      <rect x="96" y="72" width="57" height="35" fill="#107c41" />
      <path d="M36 107h117v31a4 4 0 0 1-4 4H40a4 4 0 0 1-4-4z" fill="#185c37" />
      <path d="M36 29h41a9 9 0 0 1 9 9v74a9 9 0 0 1-9 9H36z" fill="#000" opacity="0.18" />
      <path d="M36 33h37a9 9 0 0 1 9 9v66a9 9 0 0 1-9 9H36z" fill="#000" opacity="0.14" />
      <rect x="1" y="33" width="78" height="77" rx="5" fill="url(#xlFront)" />
      <LogoX x="20" y="93">X</LogoX>
    </ExcelLogo>
  );
}

export default function App() {
  return (
    <>
      <GlobalStyle />
      <Stage>
        <Hero>
          <FloorShadow />
          <SideGlow />
        </Hero>
        <OuterGlow />
        <ProlesWindow />
        <ExcelApp />
        <ExcelMark />
      </Stage>
    </>
  );
}
